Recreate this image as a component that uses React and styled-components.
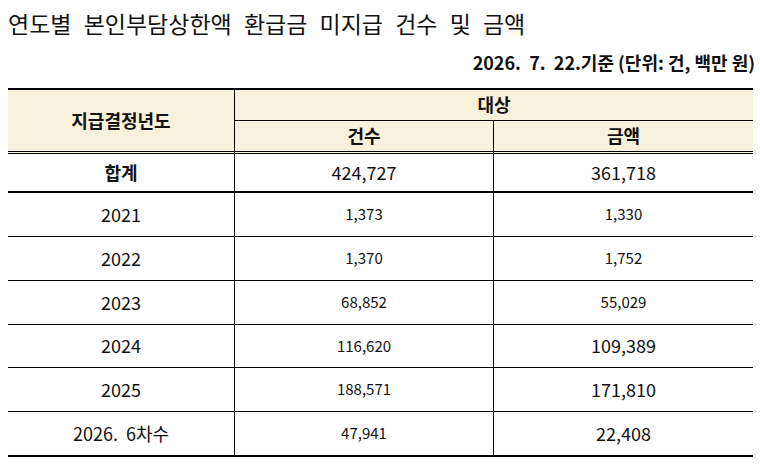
import React from 'react';
import styled, { createGlobalStyle } from 'styled-components';

const GlobalStyle = createGlobalStyle`
  html, body {
    margin: 0;
    padding: 0;
    background: #ffffff;
  }
  body {
    font-family: "Noto Sans CJK KR", "Noto Sans", sans-serif;
    color: #111111;
  }
`;

// 연도별 데이터 (big = 큰 글씨로 표시된 값)
const rows = [
  { year: '2021', count: '1,373', amount: '1,330', amountBig: false, h: 44 },
  { year: '2022', count: '1,370', amount: '1,752', amountBig: false, h: 44 },
  { year: '2023', count: '68,852', amount: '55,029', amountBig: false, h: 44 },
  { year: '2024', count: '116,620', amount: '109,389', amountBig: true, h: 43 },
  { year: '2025', count: '188,571', amount: '171,810', amountBig: true, h: 44 },
  { year: '2026.  6차수', count: '47,941', amount: '22,408', amountBig: true, h: 43, last: true },
];

function App() {
  return (
    <>
      <GlobalStyle />
      <Page>
        <Title>연도별 본인부담상한액 환급금 미지급 건수 및 금액</Title>
        <Note>2026.  7.  22.기준 (단위: 건, 백만 원)</Note>
        <Sheet>
          <HeadCell $rowSpan={2} $bottom="double" $divider>지급결정년도</HeadCell>
          <HeadCell $colSpan={2} $bottom="single">대상</HeadCell>
          <HeadCell $bottom="double" $divider>건수</HeadCell>
          <HeadCell $bottom="double">금액</HeadCell>

          <BodyCell $h={39} $bottom="thick" $divider $bold $big>합계</BodyCell>
          <BodyCell $h={39} $bottom="thick" $divider $big>424,727</BodyCell>
          <BodyCell $h={39} $bottom="thick" $big>361,718</BodyCell>

          {rows.map((r) => (
            <React.Fragment key={r.year}>
              <BodyCell $h={r.h} $bottom={r.last ? 'none' : 'single'} $divider $big>{r.year}</BodyCell>
              <BodyCell $h={r.h} $bottom={r.last ? 'none' : 'single'} $divider>{r.count}</BodyCell>
              <BodyCell $h={r.h} $bottom={r.last ? 'none' : 'single'} $big={r.amountBig}>{r.amount}</BodyCell>
            </React.Fragment>
          ))}
        </Sheet>
      </Page>
    </>
  );
}

export default App;

const borders = {
  none: 'none',
  single: '1px solid #000',
  double: '3px double #000',
  thick: '2px solid #000',
};

const Page = styled.div`
  padding: 8px 7px 0 8px;
  width: 745px;
`;

const Title = styled.h1`
  margin: 0;
  font-size: 23px;
  line-height: 30px;
  font-weight: 400;
  word-spacing: 7px;
  white-space: nowrap;
`;

const Note = styled.div`
  margin: 13px -2px 0 0;
  text-align: right;
  font-size: 18px;
  line-height: 22px;
  font-weight: 700;
  white-space: pre;
`;

const Sheet = styled.div`
  margin-top: 15px;
  display: grid;
  grid-template-columns: 227px 259px 259px;
  grid-template-rows: 31px 33px;
  grid-auto-rows: auto;
  border-top: 2px solid #000;
  border-bottom: 2px solid #000;
`;

const Cell = styled.div`
  box-sizing: border-box;
  display: flex;
  align-items: center;
  justify-content: center;
  padding-bottom: 2px;
  white-space: pre;
  border-bottom: ${(p) => borders[p.$bottom || 'none']};
  border-right: ${(p) => (p.$divider ? '1px solid #000' : 'none')};
`;

const HeadCell = styled(Cell)`
  background: #f8f1dc;
  font-size: 18px;
  font-weight: 700;
  grid-row: ${(p) => (p.$rowSpan ? `span ${p.$rowSpan}` : 'auto')};
  grid-column: ${(p) => (p.$colSpan ? `span ${p.$colSpan}` : 'auto')};
`;

const BodyCell = styled(Cell)`
  height: ${(p) => p.$h}px;
  font-size: ${(p) => (p.$big ? '18px' : '15px')};
  font-weight: ${(p) => (p.$bold ? 700 : 400)};
`;
